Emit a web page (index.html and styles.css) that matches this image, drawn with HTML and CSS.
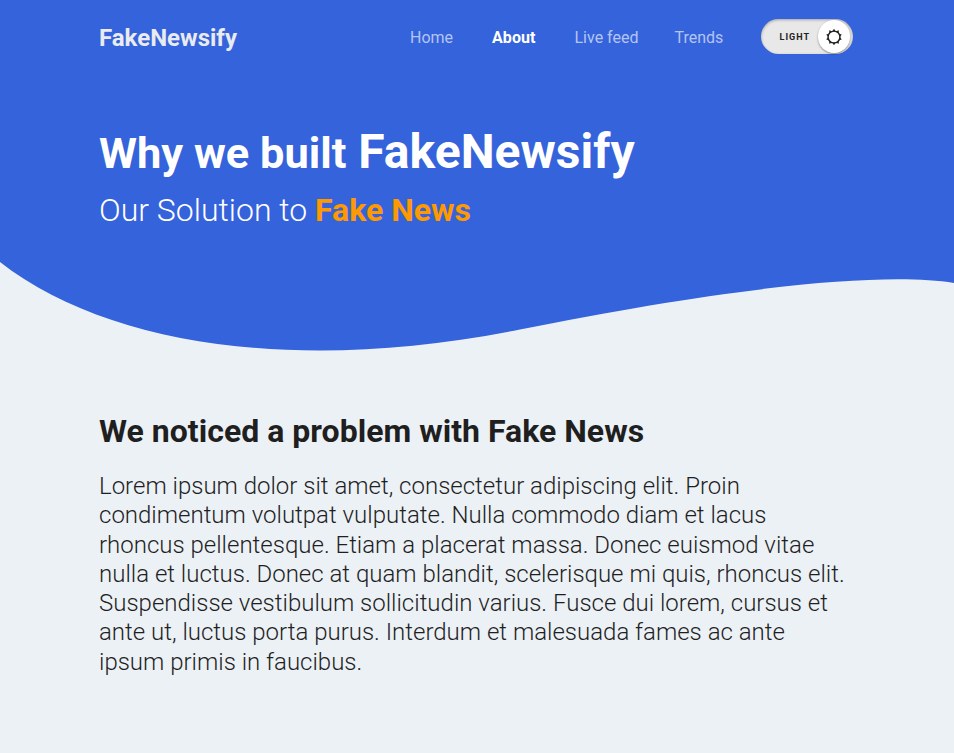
FILE: index.html
```html
<!DOCTYPE html>
<html lang="en">
<head>
<meta charset="utf-8">
<title>FakeNewsify</title>
<link rel="stylesheet" href="styles.css">
</head>
<body>
<header class="hero">
  <svg class="wave" viewBox="0 0 954 360" aria-hidden="true"><path d="M0 0H954V283C880 271 720 289 520 329.500C305 373 110 348 0 262Z"/></svg>
  <nav class="nav">
    <a class="brand">FakeNewsify</a>
    <div class="links"><a>Home</a><a class="active">About</a><a>Live feed</a><a>Trends</a></div>
    <button class="toggle"><span class="mode">LIGHT</span><span class="knob"><svg viewBox="-9 -9 18 18"><circle r="5.9"/><path class="rays" d="M-1.600 -5.800L0 -8.200L1.600 -5.800ZM-1.600 5.800L0 8.200L1.600 5.800Z"/><path class="rays" transform="rotate(36)" d="M-1.600 -5.800L0 -8.200L1.600 -5.800ZM-1.600 5.800L0 8.200L1.600 5.800Z"/><path class="rays" transform="rotate(72)" d="M-1.600 -5.800L0 -8.200L1.600 -5.800ZM-1.600 5.800L0 8.200L1.600 5.800Z"/><path class="rays" transform="rotate(108)" d="M-1.600 -5.800L0 -8.200L1.600 -5.800ZM-1.600 5.800L0 8.200L1.600 5.800Z"/><path class="rays" transform="rotate(144)" d="M-1.600 -5.800L0 -8.200L1.600 -5.800ZM-1.600 5.800L0 8.200L1.600 5.800Z"/></svg></span></button>
  </nav>
  <div class="intro">
    <h1>Why we built <span class="name">FakeNewsify</span></h1>
    <p class="sub">Our Solution to <b>Fake News</b></p>
  </div>
</header>
<main>
  <h2>We noticed a problem with Fake News</h2>
  <p class="copy">Lorem ipsum dolor sit amet, consectetur adipiscing elit. Proin<br>condimentum volutpat vulputate. Nulla commodo diam et lacus<br>rhoncus pellentesque. Etiam a placerat massa. Donec euismod vitae<br>nulla et luctus. Donec at quam blandit, scelerisque mi quis, rhoncus elit.<br>Suspendisse vestibulum sollicitudin varius. Fusce dui lorem, cursus et<br>ante ut, luctus porta purus. Interdum et malesuada fames ac ante<br>ipsum primis in faucibus.</p>
</main>
</body>
</html>
```
FILE: styles.css
```css
* { box-sizing: border-box; margin: 0; padding: 0; }
body { background: #ecf1f6; font-family: Roboto, sans-serif; color: #1f1f1f; height: 753px; overflow: hidden; }
.hero { position: relative; height: 360px; padding: 19px 101px 0 99px; color: #fff; }
.wave { position: absolute; inset: 0; width: 954px; height: 360px; z-index: -1; fill: #3563db; }
.nav { display: flex; align-items: center; height: 35px; }
.brand { width: 311px; padding-top: 2px; font-size: 24px; font-weight: 700; color: #e9ebef; }
.links { display: flex; gap: 39px; width: 351px; padding-top: 1px; font-size: 16px; white-space: nowrap; }
.links a { color: #b4c5f2; }
.links a:last-child { margin-left: -3px; }
.links .active { color: #fff; font-weight: 700; letter-spacing: .05px; }
.toggle { display: flex; align-items: center; justify-content: space-between; width: 92px; height: 35px; margin-left: auto; padding: 0 3px 0 18.5px; border: 0; border-radius: 18px; background: #e8e8e8; box-shadow: inset 0 1px 3px rgba(0, 0, 0, .3); font-family: Roboto, sans-serif; }
.mode { font-size: 9px; font-weight: 700; letter-spacing: 1.05px; color: #222; }
.knob { display: grid; place-items: center; width: 32.500px; height: 32.500px; border-radius: 50%; background: #fff; box-shadow: 0 1px 2px rgba(0, 0, 0, .4); }
.knob svg { width: 18px; height: 18px; fill: none; stroke: #222; stroke-width: 1.4; }
.knob .rays { fill: #222; stroke: none; }
.intro { padding-top: 68px; }
h1 { font-size: 43.400px; line-height: 60px; font-weight: 700; white-space: nowrap; }
.name { margin-left: 1px; font-size: 48px; letter-spacing: .05px; }
.sub { margin-top: 6px; font-size: 32px; line-height: 40px; font-weight: 300; }
.sub b { color: #ff9900; font-weight: 700; }
main { padding: 51px 99px 0; }
h2 { font-size: 32px; line-height: 40px; letter-spacing: .02px; }
.copy { margin-top: 21px; font-size: 24px; line-height: 29.3px; font-weight: 300; white-space: nowrap; }
```
